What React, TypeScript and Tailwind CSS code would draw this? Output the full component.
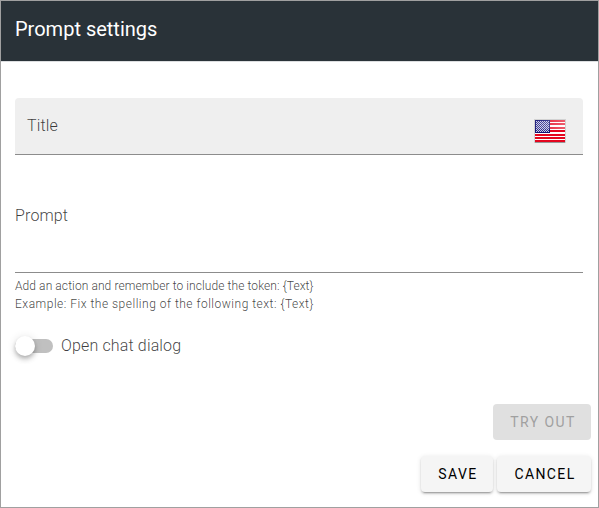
import type { ReactNode } from "react";

function Flag() {
  const stripes = [2, 5, 9, 12, 16, 19, 22];
  return (
    <svg width="34" height="26" viewBox="0 0 34 26" shapeRendering="crispEdges">
      <defs>
        <pattern id="stars" x="3" y="3" width="2" height="2" patternUnits="userSpaceOnUse">
          <rect width="2" height="2" fill="#30308e" />
          <rect width="1" height="1" fill="#d0d0e8" />
          <rect x="1" y="1" width="1" height="1" fill="#c4c4e0" />
        </pattern>
        <linearGradient id="gloss" x1="0" y1="0" x2="1" y2="0">
          <stop offset="0" stopColor="#fff" stopOpacity="0.05" />
          <stop offset="1" stopColor="#fff" stopOpacity="0.35" />
        </linearGradient>
      </defs>
      <rect x="1" y="1" width="32" height="24" rx="1" fill="#000" opacity="0.12" />
      <rect x="2" y="24" width="30" height="1" fill="#000" opacity="0.28" />
      <rect x="2" y="2" width="30" height="22" fill="#fff" />
      {stripes.map((y) => (
        <rect key={y} x="2" y={y} width="30" height="2" fill="#e4061f" />
      ))}
      <rect x="2" y="2" width="15" height="13" fill="#151577" />
      <rect x="3" y="3" width="13" height="11" fill="url(#stars)" />
      <path d="M2 2h30v9H2z" fill="url(#gloss)" />
    </svg>
  );
}

function Button({ children, className }: { children: ReactNode; className: string }) {
  return (
    <button
      className={`flex h-9 items-center justify-center rounded pl-0.5 text-sm font-normal tracking-[1.4px] ${className}`}
    >
      {children}
    </button>
  );
}

const raised =
  "bg-[#f5f5f5] text-black shadow-[0_3px_1px_-2px_rgba(0,0,0,0.2),0_2px_2px_0_rgba(0,0,0,0.14),0_1px_5px_0_rgba(0,0,0,0.12)]";

export default function App() {
  return (
    <div className="flex h-[508px] w-[599px] flex-col border border-[#a0a0a0] bg-white font-[Roboto,sans-serif] font-light text-black/75">
      <header className="flex h-[61px] shrink-0 items-center border-b border-[#dcdee0] bg-[#293238] pb-1 pl-3.5 text-xl font-normal text-white">
        <h1>Prompt settings</h1>
      </header>
      <main className="flex flex-col pr-[15px] pl-3.5">
        <div className="mt-9 flex h-[57px] items-center justify-between rounded-t border-b border-[#8c8c8c] bg-[#efefef] pr-4 pl-3">
          <span className="tracking-[0.15px]">Title</span>
          <div className="mt-2.5"><Flag /></div>
        </div>
        <div className="flex h-[118px] items-start border-b border-[#8c8c8c] pt-[49px]">
          <span className="tracking-[0.15px]">Prompt</span>
        </div>
        <div className="mt-1 text-xs leading-[18px]">
          <p className="tracking-[0.09px]">Add an action and remember to include the token: {"{Text}"}</p>
          <p className="tracking-[0.5px]">Example: Fix the spelling of the following text: {"{Text}"}</p>
        </div>
        <label className="mt-[21px] flex h-6 items-center gap-2">
          <span className="flex h-3.5 w-[38px] items-center rounded-full bg-[#c0c0c0]">
            <span className="size-5 shrink-0 rounded-full bg-white shadow-[0_2px_4px_-1px_rgba(0,0,0,0.2),0_4px_5px_0_rgba(0,0,0,0.14),0_1px_10px_0_rgba(0,0,0,0.12)]" />
          </span>
          <span className="tracking-[0.15px]">Open chat dialog</span>
        </label>
      </main>
      <footer className="mt-auto mb-[15px] flex flex-col items-end gap-4 pr-[7px]">
        <Button className="w-[98px] bg-[#e0e0e0] text-[#a0a0a0]">TRY OUT</Button>
        <div className="flex gap-1">
          <Button className={`w-[72px] ${raised}`}>SAVE</Button>
          <Button className={`w-[94px] ${raised}`}>CANCEL</Button>
        </div>
      </footer>
    </div>
  );
}
